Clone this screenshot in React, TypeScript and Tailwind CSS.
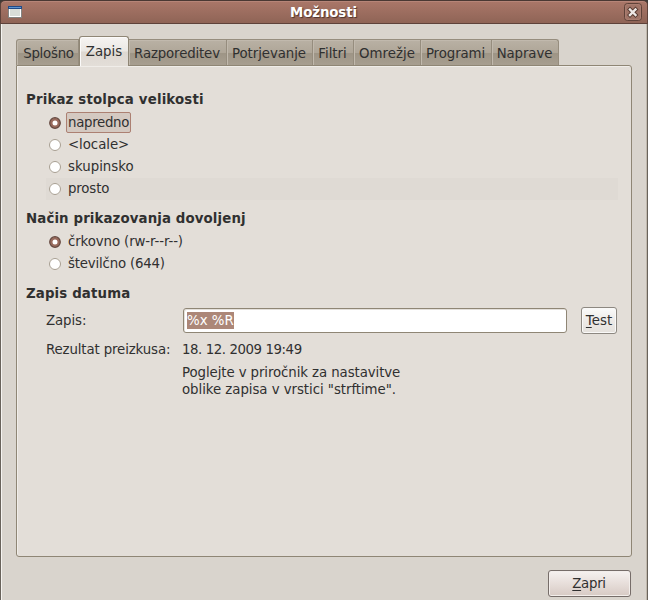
const tabs = [
  { label: "Splošno", box: "w-[63px] rounded-tl-[3px] border-l pl-[2px] tracking-[-0.25px]" },
  { label: "Zapis", box: "w-[50px]" },
  { label: "Razporeditev", box: "w-[98px] pr-px tracking-[-0.15px]" },
  { label: "Potrjevanje", box: "w-[86px] pr-px tracking-[-0.07px]" },
  { label: "Filtri", box: "w-[41px] pr-px" },
  { label: "Omrežje", box: "w-[67px]" },
  { label: "Programi", box: "w-[71px] pr-px tracking-[-0.1px]" },
  { label: "Naprave", box: "w-[67px] rounded-tr-[3px] pr-px tracking-[-0.1px]" },
];

function Tab({ label, box, active }: { label: string; box: string; active: boolean }) {
  if (active) {
    return (
      <div
        className={`${box} h-[30px] shrink-0 rounded-t-[3px] border border-b-0 border-[#8f8675] bg-[linear-gradient(#f6f4f2_0%,#ebe8e4_48%,#ded8d1_52%,#e3ded8_100%)] text-center leading-[29px] shadow-[inset_1px_1px_0_#fbfaf9]`}
      >
        {label}
      </div>
    );
  }
  return (
    <div
      className={`${box} h-[26px] shrink-0 border-t border-r border-[#968d7e] bg-[linear-gradient(#b9b1a4_0%,#afa698_50%,#9e9586_54%,#a79e90_100%)] text-center leading-[27px] shadow-[inset_1px_1px_0_#c1b9ad]`}
    >
      {label}
    </div>
  );
}

type RadioProps = { label: string; track?: string; checked?: boolean; focused?: boolean; hovered?: boolean };

function Radio({ label, track = "", checked, focused, hovered }: RadioProps) {
  return (
    <div className={`flex h-[22px] w-[572px] items-start pl-[3px] ${hovered ? "bg-[#dfdad4]" : ""}`}>
      <svg className="mt-[5px] shrink-0" width="13" height="13" viewBox="0 0 13 13">
        <circle cx="6" cy="6" r="6" fill="#eeebe7" />
        {checked ? (
          <>
            <circle cx="6" cy="6" r="5.3" fill="#996b5d" stroke="#654940" strokeWidth="1.2" />
            <circle cx="6" cy="6" r="2.5" fill="#fff" />
          </>
        ) : (
          <circle cx="6" cy="6" r="5.5" fill="#fff" stroke="#a79e91" />
        )}
      </svg>
      <span
        className={`ml-[4px] flex h-[21px] items-center rounded-[2px] border px-px ${track} ${
          focused ? "border-[#ac8072] bg-[#d4c9c1]" : "border-transparent"
        }`}
      >
        {label}
      </span>
    </div>
  );
}

export default function App() {
  return (
    <div className="flex h-[600px] w-[648px] flex-col overflow-hidden bg-[#3d3936] font-['DejaVu_Sans',sans-serif] text-[13.33px] leading-[17px] whitespace-nowrap text-[#303030]">
      <header className="flex h-[24px] shrink-0 items-center rounded-t-[5px] border border-[#5e423a] border-t-[#4a3833] bg-[linear-gradient(#aa7769,#8f6456)] shadow-[inset_0_1px_0_#b68578]">
        <svg className="ml-[7px] shrink-0" width="14" height="12" viewBox="0 0 14 12">
          <rect width="14" height="12" fill="#858582" />
          <rect x="1" y="2" width="12" height="9" fill="#fff" />
          <rect x="2" y="3" width="10" height="7" fill="#d9ddd8" />
          <rect width="14" height="3" fill="#204a87" />
          <rect x="1" y="1" width="12" height="1" fill="#5f94d0" />
        </svg>
        <h1 className="flex-1 pl-px text-center font-bold tracking-[-0.1px] text-white [text-shadow:1px_1px_1px_#4e332b]">
          Možnosti
        </h1>
        <svg className="mr-[4px] shrink-0" width="19" height="19" viewBox="0 0 19 19">
          <rect x="0.5" y="0.5" width="17" height="17" rx="3" fill="#a07467" stroke="#5f4239" />
          <rect x="1.5" y="1.5" width="15" height="15" rx="2" fill="none" stroke="#b18477" strokeOpacity=".6" />
          <path d="M6 6.5l5.5 5.5M11.5 6.5l-5.5 5.5" stroke="#55382f" strokeWidth="4.2" strokeLinecap="square" />
          <path d="M6 6.5l5.5 5.5M11.5 6.5l-5.5 5.5" stroke="#eee8e5" strokeWidth="2.4" strokeLinecap="square" />
        </svg>
      </header>

      <main className="flex flex-1 flex-col border-x border-[#69635b] bg-[#d9d4cd] px-[15px] pt-[12px] shadow-[inset_1px_0_0_#f6f4f1,inset_-1px_0_0_#c1b9ad]">
        <div className="z-10 -mb-px flex h-[30px] items-end">
          {tabs.map((t) => {
            const active = t.label === "Zapis";
            return (
              <div key={t.label} className={`flex h-[30px] ${active ? "items-start" : "items-end pb-px"}`}>
                <Tab {...t} active={active} />
              </div>
            );
          })}
        </div>
        <section className="h-[492px] w-[616px] shrink-0 rounded-[3px] rounded-tl-none border border-[#8f8675] bg-[#e3ded8] pt-[25px] pl-[9px] shadow-[inset_1px_1px_0_#f0ede9]">
          <h2 className="h-[21px] font-bold tracking-[0.17px]">Prikaz stolpca velikosti</h2>
          <div className="pl-[20px]">
            <Radio label="napredno" track="tracking-[-0.3px]" checked focused />
            <Radio label="<locale>" track="tracking-[-0.05px]" />
            <Radio label="skupinsko" />
            <Radio label="prosto" track="tracking-[-0.15px]" hovered />
          </div>
          <h2 className="mt-[10px] h-[21px] font-bold tracking-[0.12px]">Način prikazovanja dovoljenj</h2>
          <div className="pl-[20px]">
            <Radio label="črkovno (rw-r--r--)" track="tracking-[-0.11px]" checked />
            <Radio label="številčno (644)" track="tracking-[-0.19px]" />
          </div>
          <h2 className="mt-[10px] h-[21px] font-bold tracking-[0.14px]">Zapis datuma</h2>
          <div className="flex h-[28px] items-center pl-[20px]">
            <span className="w-[137px] tracking-[-0.1px]">Zapis:</span>
            <div className="mt-px flex h-[25px] w-[384px] items-center rounded-[3px] border border-[#8f8675] bg-white pl-[3px] shadow-[inset_1px_1px_0_#e4e0db]">
              <span className="bg-[#ac8778] text-white">%x %R</span>
            </div>
            <button className="ml-[14px] h-[27px] w-[36px] rounded-[3px] border border-[#8d8881] bg-[linear-gradient(#fbfbfa,#edeae7_50%,#e5e1dc)] shadow-[inset_0_0_0_1px_#faf9f8]">
              <span className="underline underline-offset-2">T</span>est
            </button>
          </div>
          <div className="mt-[7px] flex pl-[20px]">
            <span className="w-[136px] tracking-[-0.13px]">Rezultat preizkusa:</span>
            <span className="tracking-[-0.43px]">18. 12. 2009 19:49</span>
          </div>
          <p className="mt-[6px] pl-[156px] tracking-[-0.09px]">
            Poglejte v priročnik za nastavitve
            <br />
            <span className="tracking-[-0.05px]">oblike zapisa v vrstici "strftime".</span>
          </p>
        </section>
        <button className="mt-[13px] mr-px h-[27px] w-[83px] shrink-0 self-end rounded-[3px] border border-[#766d69] bg-[linear-gradient(#f6f2f0,#e7deda_50%,#d7cac4)] pr-px tracking-[-0.3px] shadow-[inset_0_0_0_1px_#f3eeeb]">
          <span className="underline underline-offset-2">Z</span>apri
        </button>
      </main>
    </div>
  );
}
